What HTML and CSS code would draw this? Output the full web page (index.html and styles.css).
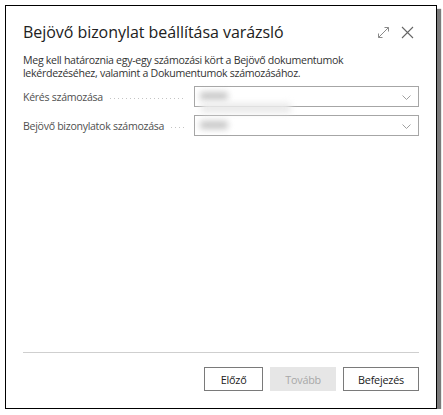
FILE: index.html
```html
<!DOCTYPE html>
<html lang="hu">
<head>
    <meta charset="UTF-8">
    <title>Bejövő bizonylat beállítása varázsló</title>
    <link rel="stylesheet" href="styles.css">
</head>
<body>

    <!-- Wizard dialog -->
    <div class="dialog">
        <header class="dialog-head">
            <h1>Bejövő bizonylat beállítása varázsló</h1>
            <div class="head-icons">
                <svg width="13" height="13" viewBox="0 0 13 13" fill="none" stroke="#8a8a8a" stroke-width="1">
                    <path d="M1.5 11.5 L11.5 1.5 M7.5 1.5 H11.5 V5.5 M1.5 7.5 V11.5 H5.5"/>
                </svg>
                <svg width="13" height="13" viewBox="0 0 13 13" fill="none" stroke="#666" stroke-width="1.1">
                    <path d="M1 1 L12 12 M12 1 L1 12"/>
                </svg>
            </div>
        </header>

        <div class="dialog-body">
            <p class="intro">Meg kell határoznia egy-egy számozási kört a Bejövő dokumentumok lekérdezéséhez, valamint a Dokumentumok számozásához.</p>

            <div class="field">
                <label>Kérés számozása</label>
                <div class="select">
                    <span class="blur blur-dark"></span>
                    <span class="blur blur-wide"></span>
                    <svg class="chevron" width="9" height="5" viewBox="0 0 9 5" fill="none" stroke="#a0a0a0" stroke-width="1">
                        <path d="M0.5 0.5 L4.5 4.5 L8.5 0.5"/>
                    </svg>
                </div>
            </div>

            <div class="field">
                <label>Bejövő bizonylatok számozása</label>
                <div class="select">
                    <span class="blur blur-dark"></span>
                    <svg class="chevron" width="9" height="5" viewBox="0 0 9 5" fill="none" stroke="#a0a0a0" stroke-width="1">
                        <path d="M0.5 0.5 L4.5 4.5 L8.5 0.5"/>
                    </svg>
                </div>
            </div>
        </div>

        <footer class="dialog-foot">
            <button class="btn">Előző</button>
            <button class="btn btn-disabled" disabled>Tovább</button>
            <button class="btn">Befejezés</button>
        </footer>
    </div>

</body>
</html>
```

FILE: styles.css
```css
body {
    margin: 0;
    padding: 5px 0 0 5px;
    background-color: #fff;
    font-family: 'Open Sans', 'Noto Sans', sans-serif;
    color: #333;
}

.dialog {
    width: 430px;
    height: 402px;
    border: 1px solid #000;
    background-color: #fff;
    box-shadow: 4px 4px 1px #7a7a7a;
    display: flex;
    flex-direction: column;
}

.dialog-head {
    display: flex;
    align-items: center;
    justify-content: space-between;
    padding: 15px 22px 0 17px;
    height: 22px;
}
.dialog-head h1 {
    margin: 0;
    font-size: 16px;
    font-weight: 400;
    color: #212121;
    letter-spacing: -0.05px;
}
.head-icons {
    display: flex;
    gap: 11px;
    align-items: center;
}

.dialog-body {
    flex: 1;
    padding: 0 17px;
}
.intro {
    margin: 11px 0 6px;
    font-size: 10.6px;
    line-height: 13px;
    color: #333;
    letter-spacing: -0.3px;
}

.field {
    display: flex;
    align-items: center;
    margin-bottom: 8px;
}
.field label {
    width: 162px;
    margin-right: 9px;
    font-size: 10.6px;
    color: #505050;
    letter-spacing: -0.3px;
    display: flex;
    align-items: center;
    white-space: nowrap;
    overflow: hidden;
}
.field label::after {
    content: "";
    flex: 1;
    height: 1px;
    margin-left: 7px;
    margin-top: 4px;
    background-image: linear-gradient(to right, #c4c4c4 1px, transparent 1px);
    background-size: 4px 1px;
}

.select {
    position: relative;
    flex: 1;
    height: 19px;
    border: 1px solid #a6a6a6;
}
.chevron {
    position: absolute;
    right: 7px;
    top: 8px;
}
.blur {
    position: absolute;
    filter: blur(3px);
    border-radius: 3px;
}
.blur-dark {
    left: 5px;
    top: 5px;
    width: 28px;
    height: 8px;
    background-color: #c6c6c6;
}
.blur-wide {
    left: 6px;
    top: 16px;
    width: 90px;
    height: 10px;
    background-color: #eaeaea;
    z-index: 1;
}

.dialog-foot {
    margin: 0 17px;
    border-top: 1px solid #cfcfcf;
    padding: 14px 0 17px;
    display: flex;
    justify-content: flex-end;
    gap: 7px;
}
.btn {
    height: 24px;
    min-width: 59px;
    padding: 0 14px;
    font-family: 'Open Sans', 'Noto Sans', sans-serif;
    font-size: 10.8px;
    color: #212121;
    background-color: #fff;
    border: 1px solid #7a7a7a;
    letter-spacing: -0.2px;
}
.btn-disabled {
    background-color: #e6e6e6;
    border-color: #e6e6e6;
    color: #a8a8a8;
}
```
